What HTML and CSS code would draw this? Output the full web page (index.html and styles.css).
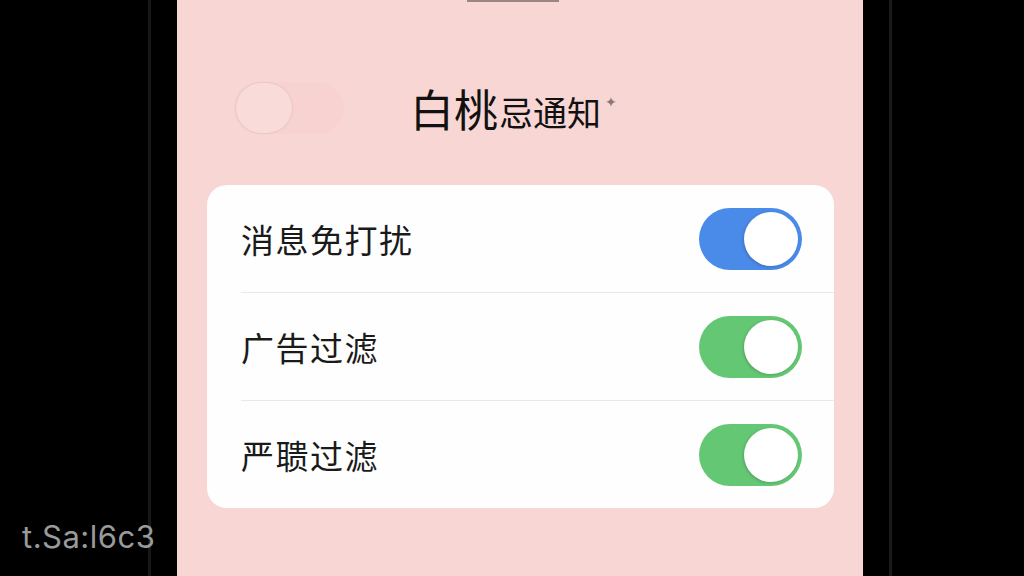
FILE: index.html
```html
<!DOCTYPE html>
<html lang="zh-CN">
<head>
    <meta charset="UTF-8">
    <meta name="viewport" content="width=device-width, initial-scale=1.0">
    <title>白桃忌通知</title>
    <link rel="stylesheet" href="styles.css">
</head>
<body>
    <div class="device">
        <div class="screen">
            <div class="notch"></div>

            <div class="header">
                <div class="ghost-toggle"><span></span></div>
                <h1 class="title">白桃<small>忌通知</small><i class="mark">✦</i></h1>
            </div>

            <div class="card">
                <div class="row">
                    <span class="label">消息免打扰</span>
                    <div class="switch blue"><span></span></div>
                </div>
                <div class="row">
                    <span class="label">广告过滤</span>
                    <div class="switch green"><span></span></div>
                </div>
                <div class="row">
                    <span class="label">严聩过滤</span>
                    <div class="switch green"><span></span></div>
                </div>
            </div>
        </div>
    </div>

    <div class="watermark">t.Sa:l6c3</div>
</body>
</html>
```

FILE: styles.css
```css
body {
    margin: 0;
    padding: 0;
    width: 1024px;
    height: 576px;
    overflow: hidden;
    background-color: #000;
    font-family: "Noto Sans CJK SC", "Noto Sans", sans-serif;
}
.device {
    margin-left: 148px;
    width: 686px;
    height: 576px;
    padding: 0 26px;
    border-left: 3px solid #171717;
    border-right: 3px solid #1b1b1b;
}
.screen {
    position: relative;
    width: 686px;
    height: 576px;
    background-color: #f8d6d4;
}
.notch {
    position: absolute;
    left: 290px;
    top: 0;
    width: 92px;
    height: 2px;
    background-color: #9b8585;
}
.header {
    display: flex;
    align-items: center;
    height: 185px;
    padding-left: 57px;
    padding-top: 31px;
    box-sizing: border-box;
}
.ghost-toggle {
    display: flex;
    align-items: center;
    width: 110px;
    height: 52px;
    border-radius: 26px;
    background-color: #f7d2d0;
    padding-left: 2px;
    box-sizing: border-box;
}
.ghost-toggle span {
    width: 56px;
    height: 50px;
    border-radius: 25px;
    background-color: #f9dcda;
    box-shadow: 0 0 2px rgba(150, 110, 110, 0.35);
}
.title {
    margin: 0 0 0 66px;
    font-size: 44px;
    font-weight: 400;
    color: #111;
    line-height: 1;
    display: flex;
    align-items: flex-end;
}
.title small {
    font-size: 34px;
    font-weight: 400;
    margin-left: 1px;
    margin-bottom: 1px;
}
.mark {
    font-style: normal;
    font-size: 14px;
    color: #8b7777;
    align-self: flex-start;
    margin: 8px 0 0 4px;
}
.card {
    margin-left: 30px;
    width: 627px;
    background-color: #fefefe;
    border-radius: 20px;
}
.row {
    display: flex;
    align-items: center;
    justify-content: space-between;
    height: 107px;
    margin-left: 34px;
    padding-right: 32px;
    border-bottom: 1px solid #ebe8e8;
}
.row:last-child {
    border-bottom: none;
}
.label {
    font-size: 33px;
    color: #1a1a1a;
    letter-spacing: 1.5px;
}
.switch {
    display: flex;
    align-items: center;
    justify-content: flex-end;
    width: 103px;
    height: 62px;
    border-radius: 31px;
    padding-right: 4px;
    box-sizing: border-box;
}
.switch span {
    width: 54px;
    height: 54px;
    border-radius: 50%;
    background-color: #fff;
    box-shadow: -1px 1px 3px rgba(0, 0, 0, 0.18);
}
.blue {
    background-color: #4a8ae8;
}
.green {
    background-color: #64c774;
}
.watermark {
    position: absolute;
    left: 22px;
    top: 518px;
    font-family: Inter, "Liberation Sans", sans-serif;
    font-size: 31px;
    letter-spacing: 0.5px;
    color: #9a9a9a;
}
```
